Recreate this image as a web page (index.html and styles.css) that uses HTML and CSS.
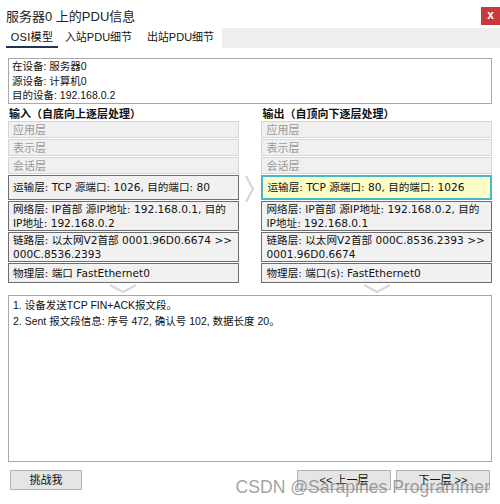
FILE: index.html
```html
<!DOCTYPE html>
<html>
<head>
<meta charset="utf-8">
<link rel="stylesheet" href="styles.css">
</head>
<body>
<div class="win">
  <div class="titlebar">
    <div class="title">服务器0 上的PDU信息</div>
    <div class="close">x</div>
  </div>
  <div class="tabs">
    <div class="tab t1 active">OSI模型</div>
    <div class="tab t2">入站PDU细节</div>
    <div class="tab t3">出站PDU细节</div>
    <div class="tabfill"></div>
  </div>
  <div class="info">
    <div>在设备: 服务器0</div>
    <div>源设备: 计算机0</div>
    <div>目的设备: 192.168.0.2</div>
  </div>
  <div class="cols">
    <div class="col">
      <div class="colhead">输入（自底向上逐层处理）</div>
      <div class="layer dim">应用层</div>
      <div class="layer dim">表示层</div>
      <div class="layer dim">会话层</div>
      <div class="layer act tall">运输层: TCP 源端口: 1026, 目的端口: 80</div>
      <div class="layer act two">网络层: IP首部 源IP地址: 192.168.0.1, 目的<br>IP地址: 192.168.0.2</div>
      <div class="layer act two">链路层: 以太网V2首部 0001.96D0.6674 &gt;&gt;<br>000C.8536.2393</div>
      <div class="layer act one">物理层: 端口 FastEthernet0</div>
      <div class="down"><svg width="28" height="10" viewBox="0 0 28 10"><path d="M1 1 L14 8 L27 1" fill="none" stroke="#d8d8d8" stroke-width="2"/></svg></div>
    </div>
    <div class="mid"><svg width="10" height="28" viewBox="0 0 10 28"><path d="M1 1 L8 14 L1 27" fill="none" stroke="#d4d4d4" stroke-width="2"/></svg></div>
    <div class="col">
      <div class="colhead">输出（自顶向下逐层处理）</div>
      <div class="layer dim">应用层</div>
      <div class="layer dim">表示层</div>
      <div class="layer dim">会话层</div>
      <div class="layer act tall hl">运输层: TCP 源端口: 80, 目的端口: 1026</div>
      <div class="layer act two">网络层: IP首部 源IP地址: 192.168.0.2, 目的<br>IP地址: 192.168.0.1</div>
      <div class="layer act two">链路层: 以太网V2首部 000C.8536.2393 &gt;&gt;<br>0001.96D0.6674</div>
      <div class="layer act one">物理层: 端口(s): FastEthernet0</div>
      <div class="down"><svg width="28" height="10" viewBox="0 0 28 10"><path d="M1 1 L14 8 L27 1" fill="none" stroke="#d8d8d8" stroke-width="2"/></svg></div>
    </div>
  </div>
  <div class="msg">
    <div>1. 设备发送TCP FIN+ACK报文段。</div>
    <div>2. Sent 报文段信息: 序号 472, 确认号 102, 数据长度 20。</div>
  </div>
  <div class="buttons">
    <div class="btn challenge">挑战我</div>
    <div class="spacer"></div>
    <div class="btn nav">&lt;&lt; 上一层</div>
    <div class="btn nav">下一层 &gt;&gt;</div>
  </div>
  <div class="watermark">CSDN @Sarapines Programmer</div>
</div>
</body>
</html>
```

FILE: styles.css
```css
* {
  box-sizing: border-box;
}
html, body {
  margin: 0;
  padding: 0;
  background: #ffffff;
}
body {
  font-family: "Liberation Sans", "Noto Sans CJK SC", sans-serif;
  font-size: 11px;
  color: #111;
}
.win {
  position: relative;
  width: 500px;
  height: 504px;
  overflow: hidden;
}
.titlebar {
  display: flex;
  align-items: flex-start;
  justify-content: space-between;
  height: 28px;
}
.title {
  font-size: 13px;
  margin: 6px 0 0 6px;
  color: #222;
}
.close {
  margin-top: 7px;
  width: 19px;
  height: 18px;
  background: #c8393b;
  color: #fff;
  font-size: 12px;
  font-weight: bold;
  line-height: 17px;
  text-align: center;
}
.tabs {
  display: flex;
  height: 20px;
  margin-bottom: 10px;
}
.tab {
  font-size: 11px;
  line-height: 18px;
  text-align: center;
  color: #111;
}
.t1 {
  margin-left: 6px;
  width: 52px;
  letter-spacing: 0.3px;
}
.t2 {
  width: 81px;
}
.t3 {
  width: 83px;
}
.tab.active {
  border-bottom: 2px solid #1d3654;
}
.tabfill {
  flex: 1;
  background: #eeeeee;
}
.info {
  margin: 0 8px;
  height: 46px;
  border: 1px solid #a8a8a8;
  padding: 0 4px 0 3px;
  line-height: 14.5px;
  font-size: 10.5px;
}
.cols {
  display: flex;
  margin: 1px 8px 0 8px;
}
.col {
  width: 231px;
  display: flex;
  flex-direction: column;
}
.mid {
  width: 23px;
  display: flex;
  justify-content: center;
  padding-top: 70px;
}
.colhead {
  font-family: "Noto Sans CJK SC", sans-serif;
  font-weight: bold;
  font-size: 11px;
  height: 16px;
  line-height: 16px;
  padding-left: 1px;
}
.layer {
  font-family: "DejaVu Sans", "Noto Sans CJK SC", sans-serif;
  font-size: 10.6px;
  margin-bottom: 1px;
  padding: 0 1px 0 4px;
  white-space: nowrap;
  overflow: hidden;
}
.dim {
  height: 17px;
  line-height: 15px;
  color: #9a9a9a;
  background: #f0f0f0;
  border: 1px solid #d6d6d6;
  font-family: "Noto Sans CJK SC", sans-serif;
  font-size: 11px;
}
.act {
  background: #f1f1f1;
  border: 1px solid #6e6e6e;
  color: #111;
}
.tall {
  height: 25px;
  line-height: 23px;
}
.two {
  height: 30px;
  line-height: 14px;
}
.one {
  height: 20px;
  line-height: 18px;
}
.hl {
  background: #fdfdc6;
  border: 2px solid #48b8c8;
  line-height: 21px;
  padding-left: 4px;
}
.down {
  display: flex;
  justify-content: center;
  height: 10px;
}
.msg {
  margin: 1px 8px 0 8px;
  height: 167px;
  border: 1px solid #a8a8a8;
  padding: 1px 4px;
  line-height: 16px;
  font-size: 10.5px;
}
.buttons {
  display: flex;
  margin: 8px 10px 0 10px;
  gap: 5px;
}
.spacer {
  flex: 1;
}
.btn {
  height: 20px;
  line-height: 18px;
  background: #e5e5e5;
  border: 1px solid #b3b3b3;
  text-align: center;
  font-size: 11px;
}
.challenge {
  width: 72px;
}
.nav {
  width: 94px;
}
.watermark {
  position: absolute;
  right: 10px;
  top: 477px;
  font-family: "Liberation Sans", sans-serif;
  font-size: 17.6px;
  color: rgba(120, 120, 120, 0.7);
  pointer-events: none;
}
```
